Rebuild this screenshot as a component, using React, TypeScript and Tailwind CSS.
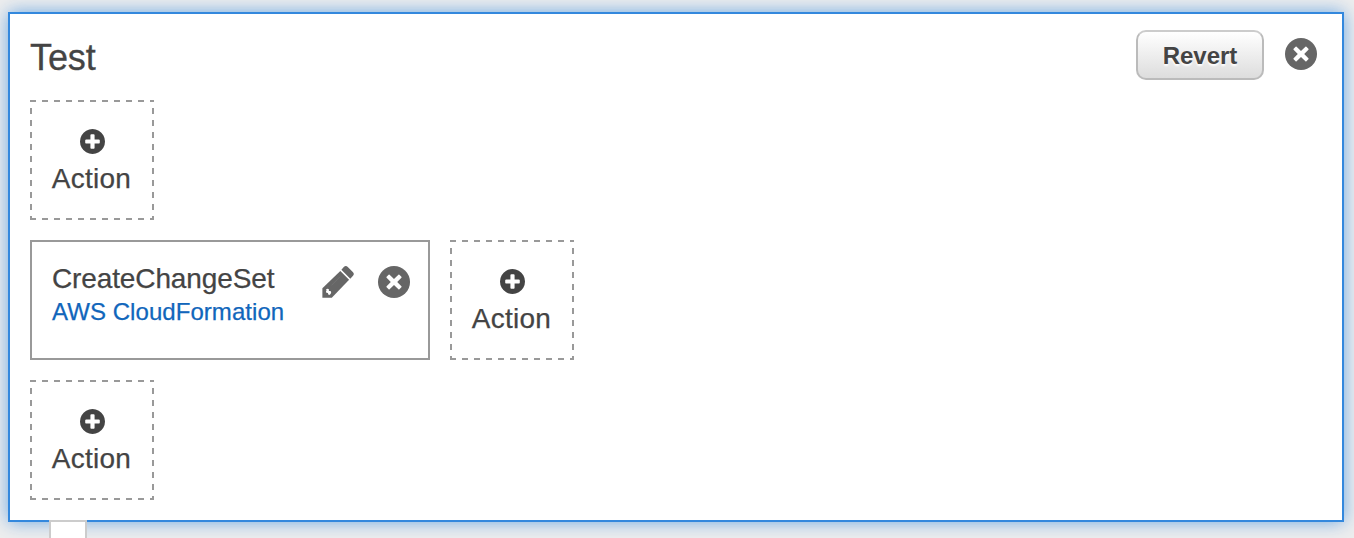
import type { ReactNode } from 'react';

function Icon({ children, className, viewBox }: { children: ReactNode; className: string; viewBox: string }) {
  return (
    <svg viewBox={viewBox} className={className} fill="currentColor" aria-hidden="true">
      {children}
    </svg>
  );
}

function CloseIcon() {
  return (
    <Icon className="size-8" viewBox="0 0 32 32">
      <circle cx="16" cy="16" r="16" />
      <path
        className="fill-white"
        d="M10.600 8.800q.5-.5 1 0L16 13l4.400-4.200q.5-.5 1 0l2 2q.5.500 0 1L19.200 16l4.200 4.200q.5.500 0 1l-2 2q-.5.500-1 0L16 19.100l-4.400 4.100q-.5.500-1 0l-2-2q-.5-.5 0-1L12.800 16 8.600 11.800q-.5-.5 0-1z"
      />
    </Icon>
  );
}

function PlusIcon() {
  return (
    <Icon className="size-[25px]" viewBox="128 128 1536 1536">
      <path d="M1344 960v-128q0-26-19-45t-45-19h-256v-256q0-26-19-45t-45-19h-128q-26 0-45 19t-19 45v256h-256q-26 0-45 19t-19 45v128q0 26 19 45t45 19h256v256q0 26 19 45t45 19h128q26 0 45-19t19-45v-256h256q26 0 45-19t19-45zm320-64q0 209-103 385.5t-279.5 279.5-385.5 103-385.5-103-279.5-279.5-103-385.5 103-385.5 279.5-279.5 385.5-103 385.500 103 279.500 279.500 103 385.500z" />
    </Icon>
  );
}

function PencilIcon() {
  return (
    <Icon className="size-8" viewBox="0 0 32 32">
      <path d="M19.400 3.800l2.400-2.700q2-2 4 0l5 5q2 2 0 4l-2.500 2.700z" />
      <path d="M18.300 4.900L.4 22.300V31.700H9.800L27.100 13.800z" />
      <path d="M9.500 19.300l8.500-8.500" className="stroke-[#777]" strokeWidth=".7" />
      <path d="M4 23.200q2.300-1 2.900.2.400.9-.2 1.700 2.600-.4 2.500 1.200-.2 1.900-1.900 2.700-1.300-.1-1.400-1.900-2.200-.1-1.900-1.600 0-.7.700-1.300z" className="fill-white" />
    </Icon>
  );
}

function DashX() {
  return <span className="block h-[2px] shrink-0 bg-[repeating-linear-gradient(90deg,#999_0,#999_6px,transparent_6px,transparent_12px)]" />;
}

function DashY() {
  return <span className="block w-[2px] shrink-0 bg-[repeating-linear-gradient(180deg,transparent_0,transparent_6px,#999_6px,#999_12px)]" />;
}

function AddAction() {
  return (
    <button type="button" className="flex h-[120px] w-[124px] flex-col">
      <span className="flex w-full flex-col"><DashX /></span>
      <span className="flex min-h-0 w-full flex-1 justify-between">
        <DashY />
        <span className="flex flex-1 flex-col items-center pt-[27px]">
          <PlusIcon />
          <span className="mt-[7px] -ml-px text-[28px] leading-[36px] tracking-[0.25px] whitespace-nowrap [-webkit-text-stroke:0.25px_#444]">Action</span>
        </span>
        <DashY />
      </span>
      <span className="flex w-full flex-col"><DashX /></span>
    </button>
  );
}

export default function App() {
  return (
    <div className="flex h-[538px] w-full flex-col overflow-hidden bg-[#eee] pt-3 pr-[10px] pl-2 font-['Liberation_Sans',Arial,sans-serif] text-[#444]">
      <section className="h-[510px] shrink-0 border-2 border-[#3388dd] bg-white shadow-[0_0_17px_#3388ddb0]">
        <header className="flex h-[86px] items-start justify-between pr-[25px] pl-5">
          <h1 className="mt-[23px] text-[36px] leading-[42px] tracking-[-0.1px] [-webkit-text-stroke:0.3px_#444]">Test</h1>
          <div className="mt-4 flex items-start gap-[21px]">
            <button type="button" className="h-[50px] w-32 rounded-[10px] border-2 border-[#bbb] border-t-[#ccc] bg-linear-to-b from-white to-[#ddd] pt-px text-[24px] font-bold tracking-[0px] [text-shadow:0_2px_2px_#fff]">
              Revert
            </button>
            <button type="button" className="mt-2 text-[#666]"><CloseIcon /></button>
          </div>
        </header>
        <div className="flex flex-col gap-5 pl-5">
          <AddAction />
          <div className="flex gap-5">
            <article className="flex h-[120px] w-[400px] justify-between border-2 border-[#999] pr-[18px] pl-5">
              <div className="pt-5">
                <h2 className="text-[28px] leading-[34px] tracking-[-0.12px] [-webkit-text-stroke:0.25px_#444]">CreateChangeSet</h2>
                <a className="block text-[24px] leading-[32px] tracking-[0.06px] whitespace-nowrap text-[#1166bb] [-webkit-text-stroke:0.25px_#1166bb]">AWS CloudFormation</a>
              </div>
              <div className="flex items-start gap-6 pt-6 text-[#666]">
                <button type="button"><PencilIcon /></button>
                <button type="button"><CloseIcon /></button>
              </div>
            </article>
            <AddAction />
          </div>
          <AddAction />
        </div>
      </section>
      <div className="relative -mt-[2px] ml-[41px] h-[18px] w-[38px] shrink-0 border-2 border-b-0 border-[#ccc] bg-white" />
    </div>
  );
}
